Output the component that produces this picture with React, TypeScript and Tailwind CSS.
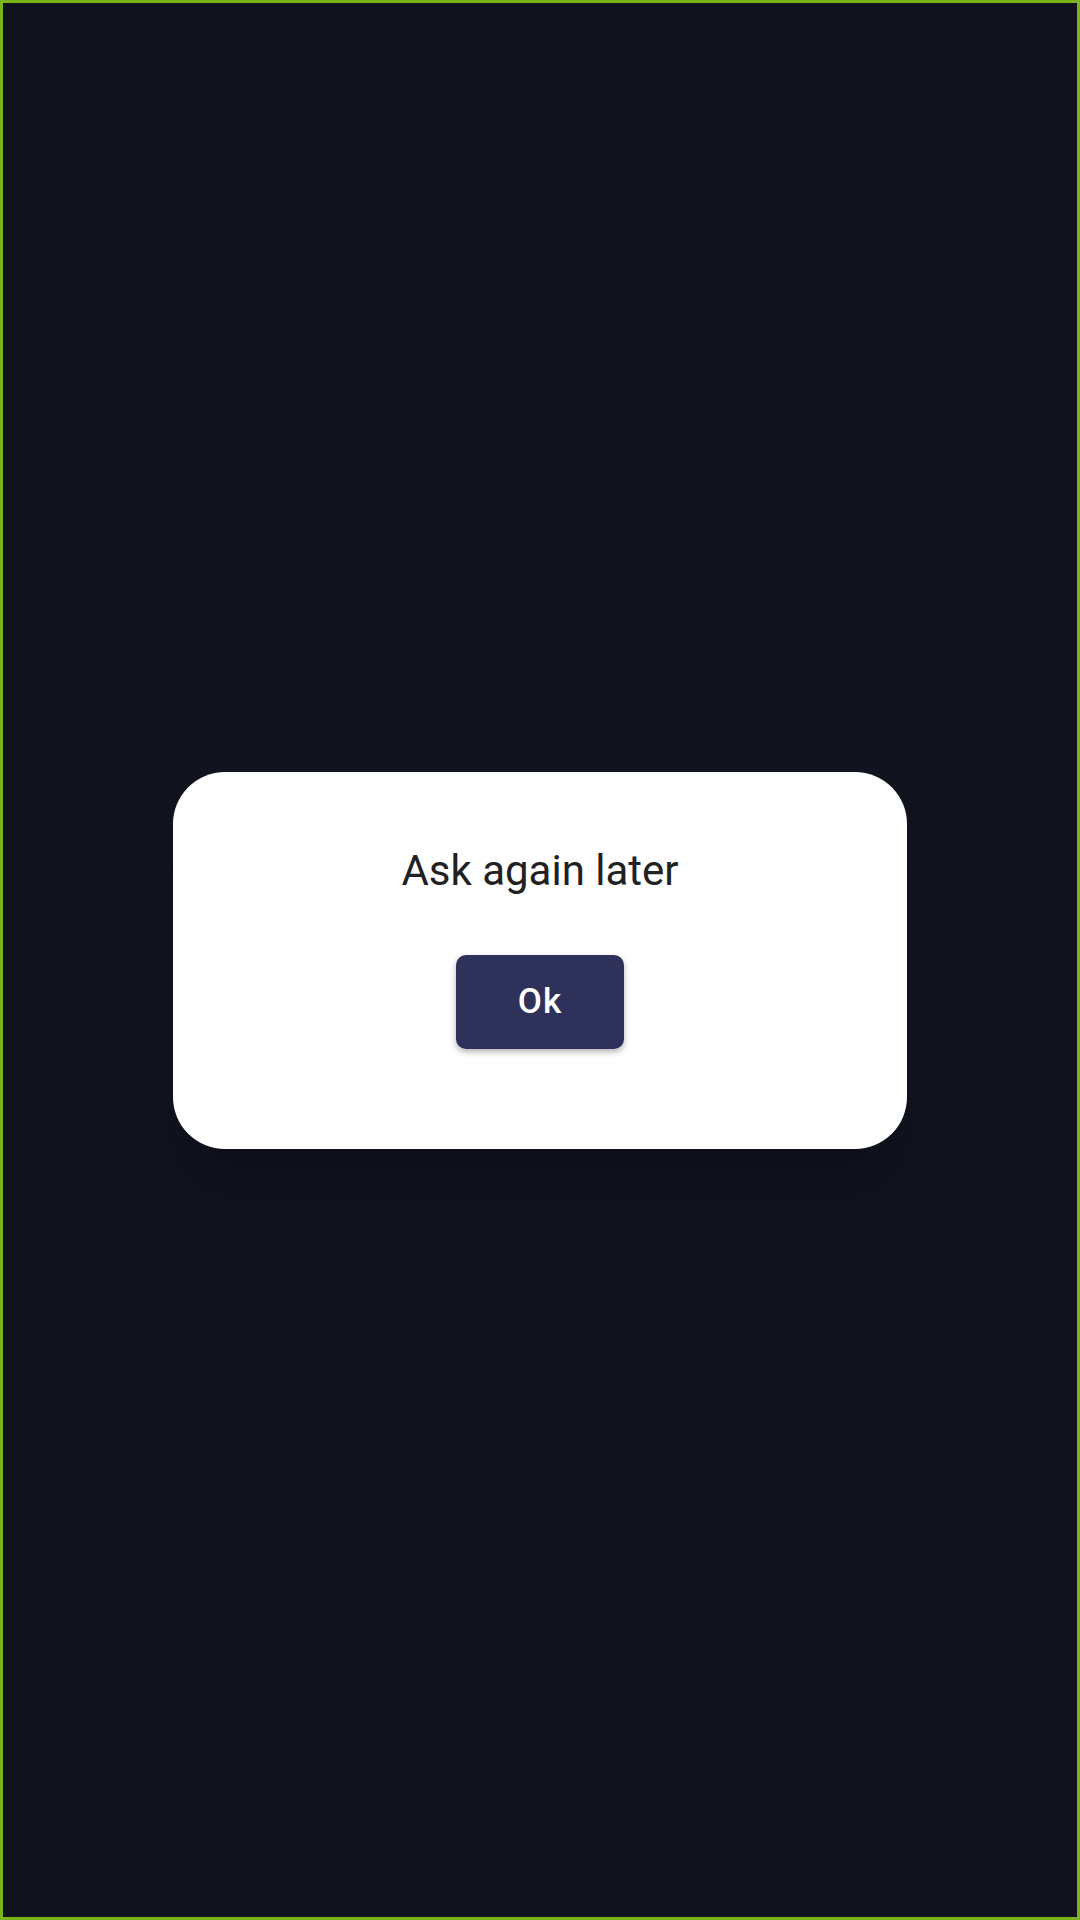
export default function App() {
  return (
    <main
      className="w-[1080px] h-[1920px] bg-[#11131f] border-[3px] border-[#7ab317] flex items-center justify-center"
      style={{ fontFamily: "Roboto, 'Noto Sans', sans-serif" }}
    >
      <div className="w-[734px] h-[377px] bg-white rounded-[52px] flex flex-col items-center pt-[75px] shadow-[0_45px_50px_-10px_rgba(0,0,0,0.22)]">
        <p className="text-[42px] leading-[48px] text-[#212121]">Ask again later</p>

        <button className="mt-[60px] w-[168px] h-[94px] pt-[2px] rounded-[10px] bg-[#2e315a] text-white text-[35px] tracking-[1px] font-medium shadow-[0_3px_6px_rgba(0,0,0,0.3)]">
          Ok
        </button>
      </div>
    </main>
  );
}
